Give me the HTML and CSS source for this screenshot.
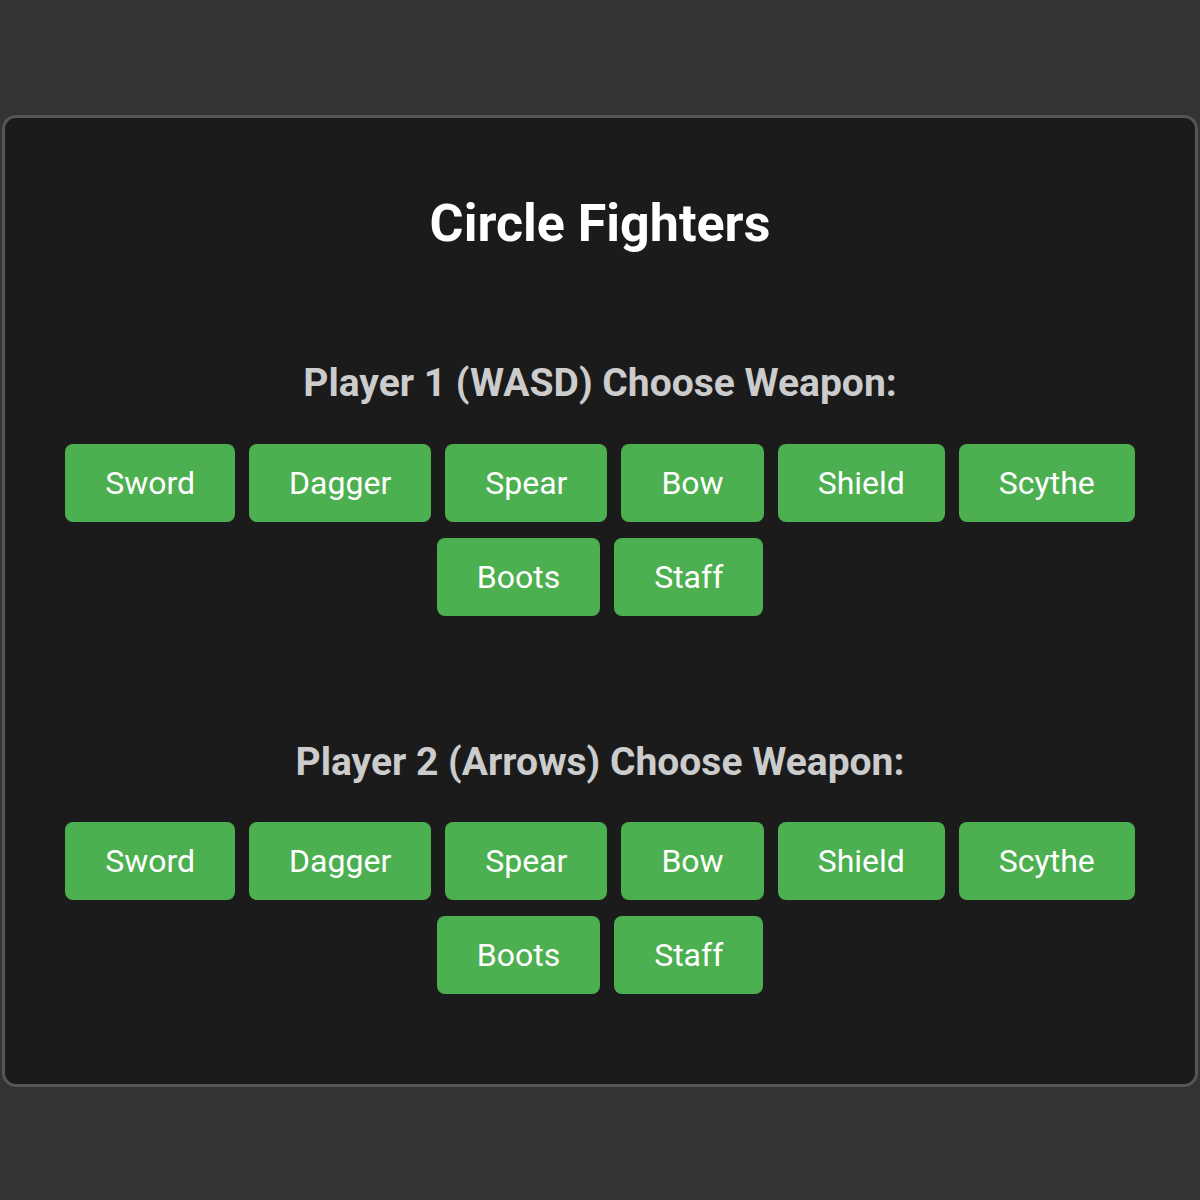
FILE: index.html
```html
<!DOCTYPE html>
<html>
<head>
<meta charset="utf-8">
<title>Circle Fighters</title>
<link rel="stylesheet" href="styles.css">
</head>
<body>
<div class="panel">
  <h1 class="title">Circle Fighters</h1>
  <section class="player p1">
    <h2 class="heading">Player 1 (WASD) Choose Weapon:</h2>
    <div class="weapons">
      <button class="btn">Sword</button>
      <button class="btn">Dagger</button>
      <button class="btn">Spear</button>
      <button class="btn">Bow</button>
      <button class="btn">Shield</button>
      <button class="btn">Scythe</button>
      <button class="btn">Boots</button>
      <button class="btn">Staff</button>
    </div>
  </section>
  <section class="player p2">
    <h2 class="heading">Player 2 (Arrows) Choose Weapon:</h2>
    <div class="weapons">
      <button class="btn">Sword</button>
      <button class="btn">Dagger</button>
      <button class="btn">Spear</button>
      <button class="btn">Bow</button>
      <button class="btn">Shield</button>
      <button class="btn">Scythe</button>
      <button class="btn">Boots</button>
      <button class="btn">Staff</button>
    </div>
  </section>
</div>
</body>
</html>
```
FILE: styles.css
```css
html, body {
  margin: 0;
  padding: 0;
  background: #333333;
  font-family: Roboto, "Liberation Sans", sans-serif;
}
body {
  padding: 115px 2px 0;
  height: 1200px;
  box-sizing: border-box;
}
.panel {
  background: #1b1b1b;
  border: 3px solid #555555;
  border-radius: 14px;
  padding: 74px 0 90px;
  text-align: center;
}
.title {
  margin: 0;
  font-size: 52px;
  line-height: 64px;
  font-weight: 700;
  color: #ffffff;
}
.player.p1 { margin-top: 103px; }
.player.p2 { margin-top: 122px; }
.heading {
  margin: 0;
  font-size: 39px;
  line-height: 48px;
  font-weight: 700;
  color: #cccccc;
}
.weapons {
  margin: 37px auto 0;
  max-width: 1100px;
  display: flex;
  flex-wrap: wrap;
  justify-content: center;
  gap: 16px 14px;
}
.p2 .weapons { margin-top: 36px; }
.btn {
  background: #4caf50;
  color: #ffffff;
  border: none;
  border-radius: 8px;
  font-family: Roboto, "Liberation Sans", sans-serif;
  font-size: 32px;
  line-height: 38px;
  padding: 20px 40px;
  cursor: pointer;
}
```
